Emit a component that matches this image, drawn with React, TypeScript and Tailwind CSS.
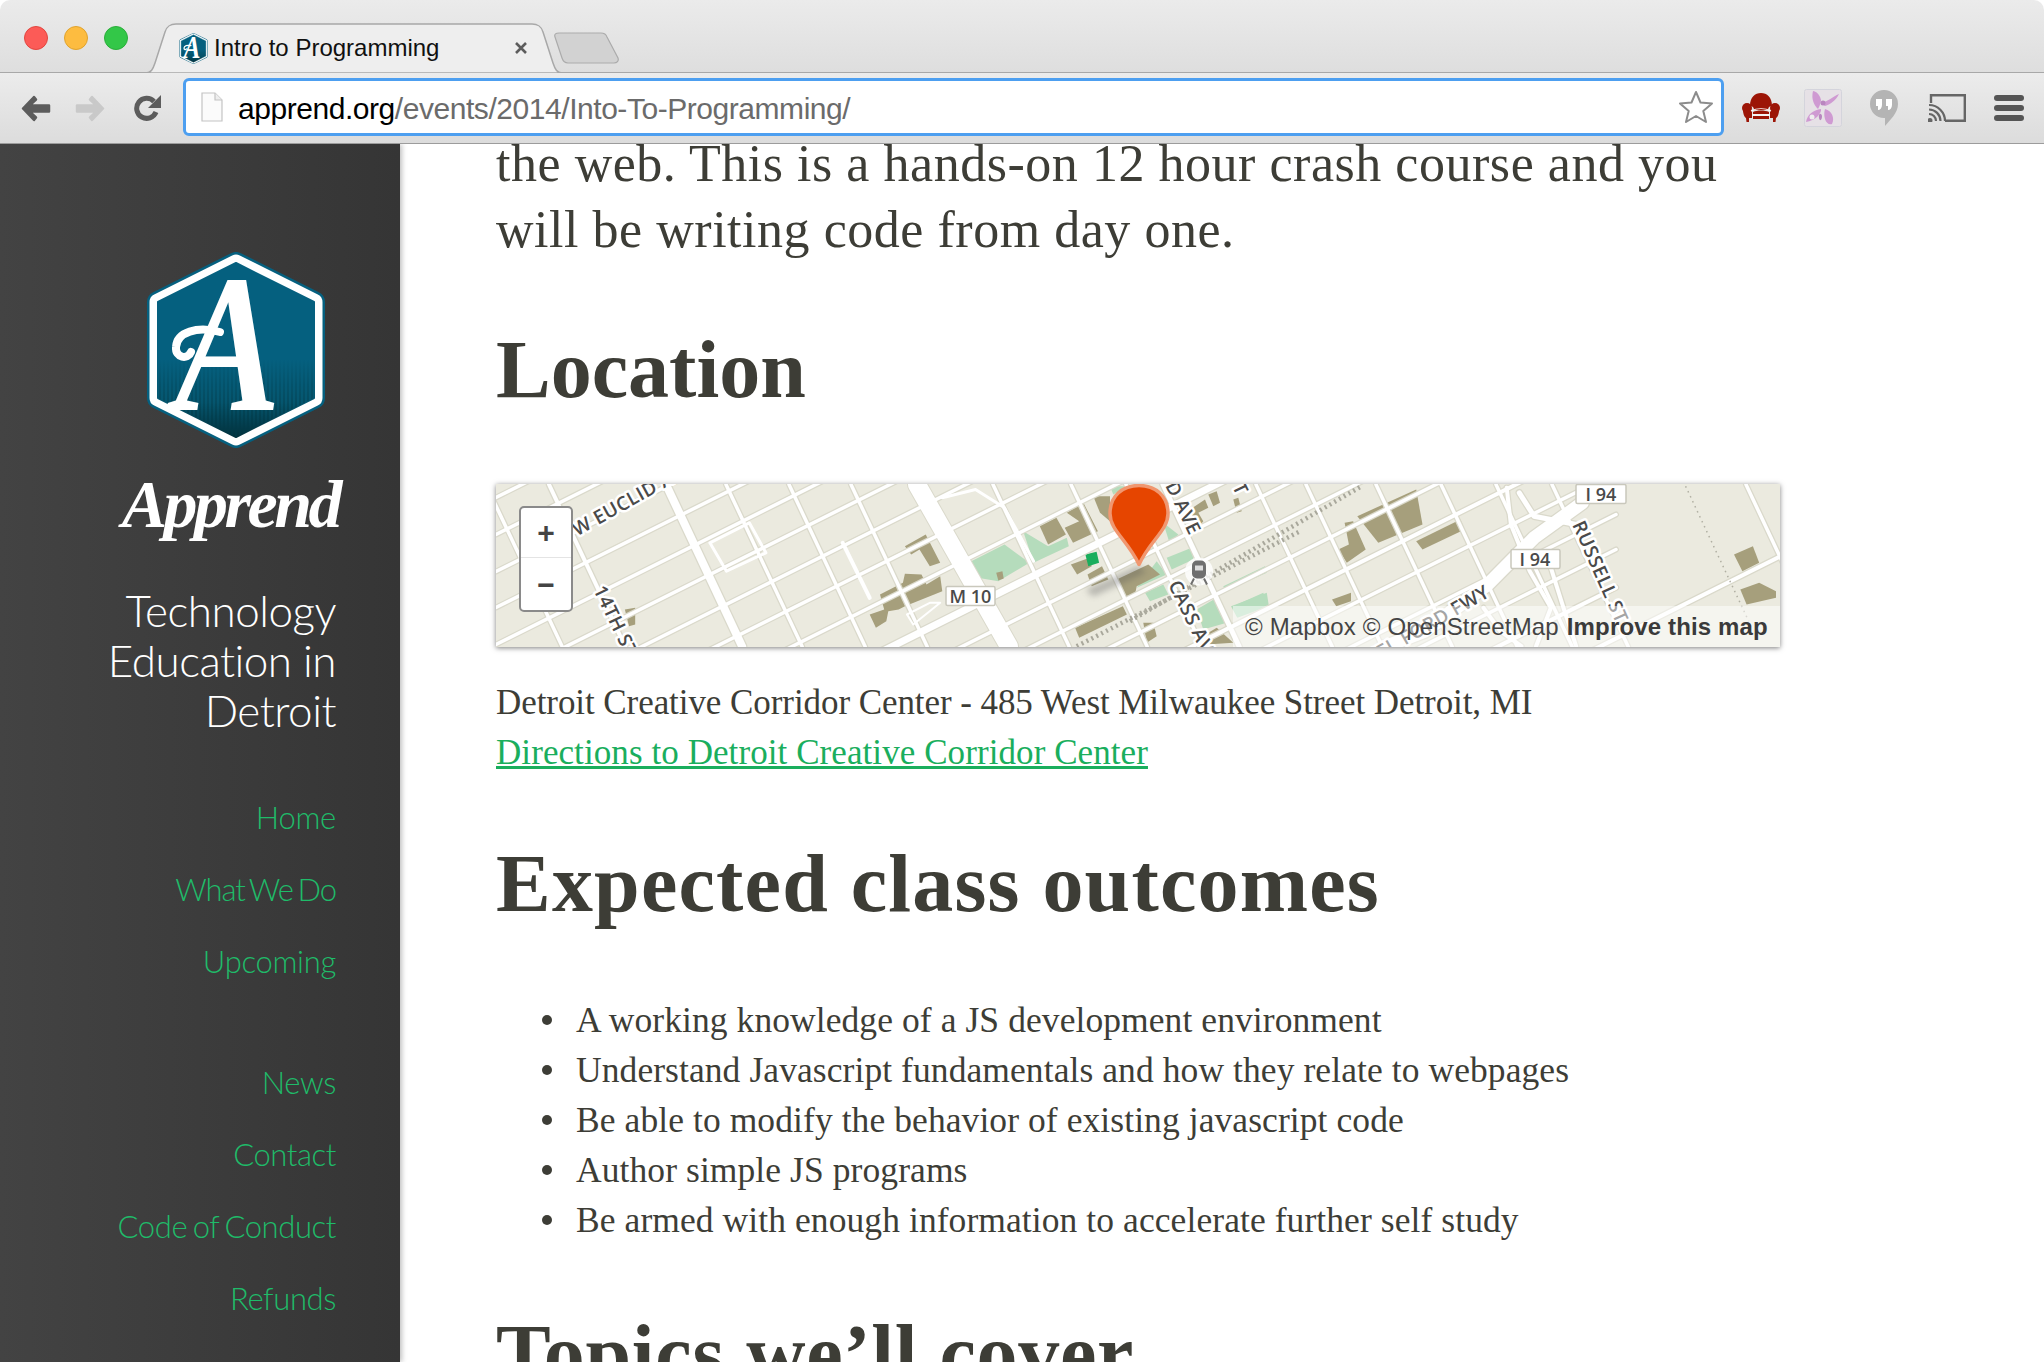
import React from "react";

type Pt = [number, number];
const z4 = (x: number, y: number): Pt => [x / 2.41 - 6, y / 3 - 10];
const z5 = (x: number, y: number): Pt => [x / 2.376 + 634, y / 3 - 10];
const z6 = (x: number, y: number): Pt => [x / 3 + 504, y / 3 - 5];
const pts = (f: (x: number, y: number) => Pt, a: number[]) => {
  const out: string[] = [];
  for (let i = 0; i < a.length; i += 2) {
    const [x, y] = f(a[i], a[i + 1]);
    out.push(`${x.toFixed(1)},${y.toFixed(1)}`);
  }
  return out.join(" ");
};

const familyA: [number, number, number?, number?][] = [
  [13, 3.5], [50, 3.5], [87, 3.5], [123, 3.5], [160, 3.5], [197, 3.5], [235, 3.5], [272, 3.5], [310, 3.5],
  [360, 7], [395, 3.5], [430, 3.5], [470, 3.5], [510, 4], [548, 3.5, 0, 1120], [590, 3.5, 0, 1120], [625, 3.5, 820, 1120], [663, 4, 0, 1120], [714, 4, 1060, 1284],
];
const familyB: [number, number][] = [
  [-10, 3.5], [53, 4], [170, 8], [230, 3.5], [293, 3.5], [355, 3.5], [497, 3.5], [575, 3.5], [630, 3.5], [667, 5],
  [760, 3.5], [810, 3.5], [880, 3.5], [945, 3.5], [1000, 3.5], [1056, 3.5], [1250, 3.5],
];

const tan = [
  pts(z4, [325, 405, 350, 400, 350, 450, 335, 455]),
  pts(z4, [1000, 215, 1050, 180, 1085, 265, 1060, 275, 1035, 225, 1015, 240]),
  pts(z4, [940, 360, 995, 325, 1000, 298, 1040, 300, 1052, 330, 1085, 305, 1090, 350, 1000, 395, 985, 405, 960, 410, 955, 440, 930, 460, 915, 420, 950, 405]),
  pts(z4, [1325, 155, 1365, 130, 1388, 180, 1345, 210]),
  pts(z4, [1390, 115, 1430, 85, 1465, 170, 1405, 205, 1385, 160, 1420, 140]),
  pts(z4, [1400, 270, 1445, 250, 1450, 275, 1415, 300]),
  pts(z4, [1440, 300, 1475, 275, 1490, 315, 1450, 335]),
  pts(z4, [1410, 460, 1525, 395, 1535, 420, 1420, 490]),
  pts(z4, [1220, 295, 1235, 290, 1238, 312, 1225, 318]),
  pts(z5, [540, 125, 680, 45, 695, 150, 590, 205]),
  pts(z5, [510, 145, 530, 140, 560, 225, 515, 265, 495, 225, 520, 210]),
  pts(z5, [680, 200, 785, 135, 795, 165, 695, 225]),
  pts(z5, [1435, 240, 1480, 215, 1495, 265, 1455, 290]),
  pts(z5, [1450, 345, 1495, 325, 1535, 350, 1535, 370, 1465, 390]),
  pts(z5, [480, 375, 525, 355, 525, 380, 490, 395]),
  pts(z6, [350, 300, 445, 255, 480, 285, 410, 320, 405, 345, 375, 350]),
  pts(z6, [570, 90, 615, 60, 625, 85, 595, 100, 610, 125, 590, 150]),
  pts(z6, [625, 45, 650, 35, 660, 70, 640, 80]),
  pts(z6, [700, 60, 715, 55, 725, 95, 710, 100]),
  pts(z6, [430, 430, 460, 430, 470, 470, 440, 490]),
  pts(z6, [625, 460, 650, 445, 700, 490, 620, 495]),
  pts(z6, [280, 50, 330, 50, 330, 125, 300, 100]),
];
const parks = [
  pts(z4, [1160, 260, 1240, 210, 1300, 265, 1225, 320, 1175, 310]),
  pts(z4, [1285, 170, 1345, 215, 1390, 190, 1395, 215, 1310, 265]),
  pts(z6, [410, 325, 470, 245, 500, 285]),
  pts(z6, [500, 235, 575, 205, 580, 240, 515, 270]),
  pts(z6, [490, 130, 535, 165, 510, 195]),
  pts(z6, [670, 320, 795, 260, 800, 280, 675, 335]),
  pts(z6, [590, 390, 650, 355, 680, 430, 610, 450]),
  pts(z6, [700, 380, 790, 340, 800, 370, 710, 410]),
  pts(z6, [435, 340, 490, 315, 505, 345, 450, 365]),
  pts(z6, [330, 20, 385, 20, 340, 45]),
  pts(z5, [240, 395, 325, 355, 330, 395, 255, 430]),
];

function Map() {
  const H = 162;
  const aLine = ([c, , a = 0, b = 1284]: [number, number, number?, number?]) =>
    `M${a} ${c - 0.5 * a}L${b} ${c - 0.5 * b}`;
  const bLine = ([x0]: [number, number]) => `M${x0} 0L${x0 + H * 0.47} ${H}`;
  const fwy = [
    { d: pts(z5, [1075, 85, 960, 190, 850, 330, 700, 470, 600, 520]), w: 13 },
    { d: pts(z5, [895, 40, 905, 150, 950, 290, 1000, 400, 965, 515]), w: 4 },
    { d: pts(z5, [925, 55, 960, 125, 1060, 150]), w: 5 },
    { d: pts(z5, [840, 400, 880, 470, 930, 515]), w: 4 },
    { d: pts(z5, [1000, 280, 1030, 400, 1060, 515]), w: 4 },
  ];
  const label = "fill-[#4a4a4a] font-['Open_Sans',sans-serif] text-[19px] font-semibold [paint-order:stroke] stroke-white stroke-[5px] [stroke-linejoin:round]";
  const shield = "fill-[#4a4a4a] font-['Open_Sans',sans-serif] text-[18px] font-semibold";
  return (
    <svg viewBox="0 0 1284 162" className="block w-full h-full bg-[#ebeadf]">
      {parks.map((p, i) => <polygon key={i} points={p} fill="#b5dcbc" />)}
      {tan.map((p, i) => <polygon key={i} points={p} fill="#a69f7c" />)}
      <polygon points={pts(z4, [1435, 240, 1462, 232, 1468, 265, 1442, 275])} fill="#1aae5d" />
      <g fill="none" stroke="#dad9cb" strokeLinecap="round" strokeLinejoin="round">
        {familyA.map((l, i) => <path key={i} d={aLine(l)} strokeWidth={l[1] + 2.5} />)}
        {familyB.map((l, i) => <path key={i} d={bLine(l)} strokeWidth={l[1] + 2.5} />)}
        <path d="M421 0L513 162" strokeWidth="20" />
        {fwy.map((l, i) => <polyline key={i} points={l.d} strokeWidth={l.w + 2.5} />)}
      </g>
      <g fill="none" stroke="#fff" strokeLinecap="round" strokeLinejoin="round">
        {familyA.map((l, i) => <path key={i} d={aLine(l)} strokeWidth={l[1]} />)}
        {familyB.map((l, i) => <path key={i} d={bLine(l)} strokeWidth={l[1]} />)}
        <path d="M421 0L513 162" strokeWidth="18" />
        {fwy.map((l, i) => <polyline key={i} points={l.d} strokeWidth={l.w} />)}
        <polyline points={pts(z4, [530, 205, 625, 145, 665, 235, 570, 290, 530, 205])} strokeWidth="3" />
        <polyline points={pts(z4, [1090, 70, 1170, 45, 1240, 100, 1310, 260])} strokeWidth="3" />
        <polyline points={pts(z4, [850, 205, 915, 370])} strokeWidth="4" />
        <polyline points={pts(z4, [1005, 420, 1060, 385, 1085, 385, 1020, 450, 1005, 420])} strokeWidth="2" />
      </g>
      <g fill="none" stroke="#a9a89c" strokeWidth="4.5" strokeDasharray="2 3.5">
        <polyline points={pts(z6, [230, 500, 900, 155])} />
        <polyline points={pts(z5, [0, 440, 550, 35])} />
      </g>
      <polyline points={pts(z5, [1320, 35, 1470, 440])} fill="none" stroke="#b0afa2" strokeWidth="1.5" strokeDasharray="1.5 4" />
      <g transform="translate(703 87)">
        <circle r="14" fill="#fff" opacity="0.8" />
        <rect x="-7" y="-11" width="14" height="18" rx="5" fill="#6f6f6f" />
        <rect x="-4" y="-6" width="8" height="5" fill="#dcdcdc" />
        <path d="M-5 7L-8 13M5 7L8 13" stroke="#6f6f6f" strokeWidth="2" />
      </g>
      <text transform="translate(81 52) rotate(-29)" className={label} letterSpacing="0.5">W EUCLID A</text>
      <text transform="translate(97 105) rotate(64)" className={label} letterSpacing="0.5">14TH ST</text>
      <text transform="translate(669 1) rotate(64)" className={label} letterSpacing="0.5">D AVE</text>
      <text transform="translate(672 100) rotate(64)" className={label} letterSpacing="0.5">CASS AV</text>
      <text transform="translate(1076 40) rotate(66)" className={label} letterSpacing="0.5">RUSSELL ST</text>
      <text transform="translate(876 180) rotate(-30)" className={label} letterSpacing="0.5">FEL FORD FWY</text>
      <text transform="translate(736 2) rotate(64)" className={label}>T</text>
      {[[450, 102, 49], [1080, 0, 50], [1015, 65, 49]].map(([x, y, w], i) => (
        <rect key={i} x={x} y={y} width={w} height="19" rx="1.5" fill="#fff" stroke="#c9c8bc" strokeWidth="1.5" />
      ))}
      <text x="474.5" y="118" textAnchor="middle" className={shield}>M 10</text>
      <text x="1105" y="16" textAnchor="middle" className={shield}>I 94</text>
      <text x="1039" y="81" textAnchor="middle" className={shield}>I 94</text>
      <polygon points="643,81 590,105 597,112 650,88" fill="#555" opacity="0.35" style={{ filter: "blur(3px)" }} />
      <path d="M643 80C632 56 614 46 614 29C614 11 627 1 643 1C659 1 672 11 672 29C672 46 654 56 643 80Z" fill="#e64500" stroke="#f09770" strokeWidth="3.5" strokeLinejoin="round" />
    </svg>
  );
}

function Hex({ id, className }: { id: string; className: string }) {
  const hex = "89,11 167,50 167,146 89,185 11,146 11,50";
  return (
    <svg viewBox="0 0 178 196" className={className}>
      <defs>
        <linearGradient id={`${id}g`} x1="0" y1="0" x2="0" y2="1">
          <stop offset="0.55" stopColor="#05607f" />
          <stop offset="0.8" stopColor="#05566f" />
          <stop offset="1" stopColor="#02313c" />
        </linearGradient>
        <pattern id={`${id}s`} width="4" height="10" patternUnits="userSpaceOnUse">
          <rect width="2" height="10" fill="#023a48" />
        </pattern>
        <linearGradient id={`${id}f`} x1="0" y1="0" x2="0" y2="1">
          <stop offset="0.55" stopColor="#fff" stopOpacity="0" />
          <stop offset="1" stopColor="#fff" stopOpacity="0.8" />
        </linearGradient>
        <mask id={`${id}m`}>
          <rect width="178" height="196" fill={`url(#${id}f)`} />
        </mask>
      </defs>
      <polygon points={hex} fill="#05607f" stroke="#05607f" strokeWidth="22" strokeLinejoin="round" />
      <polygon points={hex} fill="#fff" stroke="#fff" strokeWidth="17" strokeLinejoin="round" />
      <polygon points={hex} fill={`url(#${id}g)`} stroke={`url(#${id}g)`} strokeWidth="2" strokeLinejoin="round" />
      <polygon points={hex} fill={`url(#${id}s)`} mask={`url(#${id}m)`} />
      <text transform="translate(28 158) scale(0.8 1)" fill="#fff" fontFamily="Liberation Serif, serif" fontWeight="700" fontStyle="italic" fontSize="198">A</text>
      <path d="M73 80C50 74 30 80 29 95C28 106 41 108 44 100" fill="none" stroke="#fff" strokeWidth="8" strokeLinecap="round" />
    </svg>
  );
}

const BackArrow = ({ className, color }: { className: string; color: string }) => (
  <svg viewBox="0 0 31 27" className={className}>
    <path d="M14 2L3 13.5L14 25L16 22.5L9.500 16.500H29V10.500H9.500L16 4.500Z" fill={color} stroke={color} strokeWidth="2.500" strokeLinejoin="round" />
  </svg>
);

const navB = ["News", "Contact", "Code of Conduct", "Refunds"];
const outcomes = [
  "A working knowledge of a JS development environment",
  "Understand Javascript fundamentals and how they relate to webpages",
  "Be able to modify the behavior of existing javascript code",
  "Author simple JS programs",
  "Be armed with enough information to accelerate further self study",
];

export default function App() {
  return (
    <div className="w-[2044px] h-[1362px] overflow-hidden bg-white flex flex-col">
      {/* window chrome */}
      <header className="relative z-10 h-[144px] shrink-0 rounded-t-[10px] overflow-hidden font-['Liberation_Sans',sans-serif]">
        <div className="h-[73px] bg-gradient-to-b from-[#ebebeb] to-[#dedede] border-b border-[#a8a8a8] flex items-start">
          <div className="flex gap-[16px] pl-[24px] pt-[26px] w-[146px]">
            <span className="w-[24px] h-[24px] rounded-full bg-[#fc5b57] border border-[#e2463f]" />
            <span className="w-[24px] h-[24px] rounded-full bg-[#fdbc40] border border-[#e0a32e]" />
            <span className="w-[24px] h-[24px] rounded-full bg-[#33c748] border border-[#2aae3a]" />
          </div>
          <div className="relative w-[416px] h-[50px] mt-[23px] flex items-center pl-[33px] pr-[34px]">
            <svg viewBox="0 0 416 50" className="absolute inset-0 w-full h-full">
              <path d="M0 50C5 50 7 46 9 40L19 9C21 3 24 1 30 1H386C392 1 395 3 397 9L407 40C409 46 411 50 416 50Z" fill="#eeeeee" stroke="#a8a8a8" strokeWidth="1.500" />
              <path d="M0 50H416V51H0Z" fill="#eeeeee" />
            </svg>
            <Hex id="fav" className="relative w-[29px] h-[31px] shrink-0" />
            <span className="relative ml-[6px] text-[24px] leading-none text-[#111]">Intro to Programming</span>
            <svg viewBox="0 0 14 14" className="relative ml-auto w-[14px] h-[14px]">
              <path d="M2 2L12 12M12 2L2 12" stroke="#5c5c5c" strokeWidth="2.600" />
            </svg>
          </div>
          <svg viewBox="0 0 66 32" className="w-[66px] h-[32px] mt-[32px] -ml-[8px]">
            <path d="M1 5C0 2 2 1 5 1H47C50 1 52 2 53 5L64 26C65 29 63 31 60 31H14C11 31 9 29 8 26Z" fill="#d2d2d2" stroke="#ababab" strokeWidth="1.200" />
          </svg>
        </div>
        <div className="h-[71px] bg-gradient-to-b from-[#ececec] to-[#dcdcdc] border-b border-[#9c9c9c] flex items-center pl-[20px] pr-[20px]">
          <BackArrow className="w-[31px] h-[27px]" color="#5c5c5c" />
          <BackArrow className="w-[31px] h-[27px] ml-[24px] -scale-x-100" color="#c9c9c9" />
          <svg viewBox="0 0 27 27" className="w-[27px] h-[27px] ml-[28px]">
            <path d="M22 17A10 10 0 1 1 20 6.500" fill="none" stroke="#5c5c5c" strokeWidth="5" />
            <path d="M27 0V13H14Z" fill="#5c5c5c" />
          </svg>
          <div className="ml-[22px] w-[1541px] h-[58px] -mt-[2px] bg-white rounded-[6px] border-[3px] border-[#4d9ff0] flex items-center pl-[15px] pr-[6px]">
            <svg viewBox="0 0 22 30" className="w-[22px] h-[30px] shrink-0">
              <path d="M1 1H14L21 8V29H1Z" fill="#fbfbfb" stroke="#c4c4c4" strokeWidth="1.200" />
              <path d="M14 1V8H21" fill="#eee" stroke="#c4c4c4" strokeWidth="1.200" />
            </svg>
            <span className="ml-[15px] pt-[2px] text-[30px] tracking-[-0.45px] text-[#6b6b6b] whitespace-nowrap">
              <span className="text-black">apprend.org</span>/events/2014/Into-To-Programming/
            </span>
            <svg viewBox="0 0 36 34" className="ml-auto mr-[1px] w-[36px] h-[34px]">
              <path d="M18 2L22.500 12.500L34 13.500L25.300 21L28 32L18 26L8 32L10.700 21L2 13.500L13.500 12.500Z" fill="#fff" stroke="#8c8c8c" strokeWidth="2" strokeLinejoin="round" />
            </svg>
          </div>
          <svg viewBox="0 0 38 30" className="ml-[18px] w-[38px] h-[30px]">
            <path d="M8 13C8 4 13 0 19 0C25 0 30 4 30 13C27 13 26 15 26 17H12C12 15 11 13 8 13Z" fill="#9c1506" />
            <circle cx="5" cy="15" r="5" fill="#9c1506" />
            <circle cx="33" cy="15" r="5" fill="#9c1506" />
            <path d="M1 17H8C9 17 10 18 10 19V25H7V29H4.500L4 25C2 24 1 20 1 17Z" fill="#9c1506" />
            <path d="M37 17H30C29 17 28 18 28 19V25H31V29H33.500L34 25C36 24 37 20 37 17Z" fill="#9c1506" />
            <path d="M11 19C15 17 23 17 27 19V21H11Z" fill="#9c1506" />
            <path d="M11 23H27V26H11Z" fill="#9c1506" />
            <path d="M9 18C15 15 23 15 29 18" fill="none" stroke="#fff" strokeWidth="1.200" />
            <path d="M10 22H28" stroke="#fff" strokeWidth="1.200" />
          </svg>
          <svg viewBox="0 0 38 38" className="ml-[24px] w-[38px] h-[38px]">
            <rect x="0.500" y="0.500" width="37" height="37" rx="2" fill="#e6e1e6" stroke="#d4d4dc" />
            <path d="M9 2C14 3 16 7 17 11C17 14 15 18 14 20C10 16 7 10 9 2Z" fill="#cf9ad2" />
            <path d="M35 5C32 11 27 15 21 17C19 16 18 14 20 12C22 14 28 8 35 5Z" fill="#cf9ad2" />
            <path d="M2 33C3 26 9 21 17 20C18 24 11 32 2 33Z" fill="#cf9ad2" />
            <path d="M21 20C28 22 31 29 28 35C25 36 22 34 21 30C20 27 20 23 21 20Z" fill="#cf9ad2" />
            <circle cx="19" cy="14" r="2.500" fill="#b986bf" />
            <path d="M15 29C14 25 17 23 18 27C18 31 16 33 15 29Z" fill="#b986bf" />
            <circle cx="8" cy="28" r="2.500" fill="#eee" />
          </svg>
          <svg viewBox="0 0 28 36" className="ml-[28px] w-[28px] h-[36px]">
            <path d="M14 0A14 14 0 0 1 28 14C28 23 20 30 15 36V28H14A14 14 0 0 1 14 0Z" fill="#b4b4b4" />
            <path d="M6 9H12V15C12 18 10 20 8 20V16H6ZM16 9H22V15C22 18 20 20 18 20V16H16Z" fill="#fff" />
          </svg>
          <svg viewBox="0 0 38 28" className="ml-[30px] w-[38px] h-[28px]">
            <path d="M3 9V1.200H36.800V26.800H17" fill="none" stroke="#666" strokeWidth="2.400" />
            <circle cx="2" cy="26.500" r="2.500" fill="#666" />
            <path d="M1 20A7 7 0 0 1 8 27" fill="none" stroke="#666" strokeWidth="2.200" />
            <path d="M1 15.500A11.500 11.500 0 0 1 12.500 27" fill="none" stroke="#666" strokeWidth="2.200" />
            <path d="M1 11A16 16 0 0 1 17 27" fill="none" stroke="#666" strokeWidth="2.200" />
          </svg>
          <div className="ml-[28px] w-[30px] flex flex-col gap-[4px]">
            <span className="h-[6px] rounded-full bg-[#555]" />
            <span className="h-[6px] rounded-full bg-[#555]" />
            <span className="h-[6px] rounded-full bg-[#555]" />
          </div>
        </div>
      </header>

      <div className="flex flex-1 min-h-0">
        {/* sidebar */}
        <aside className="relative z-[5] w-[400px] shrink-0 bg-gradient-to-r from-[#434343] to-[#353535] shadow-[2px_0_5px_rgba(0,0,0,0.25)] flex flex-col items-end pr-[64px] text-right">
          <Hex id="logo" className="w-[178px] h-[196px] mt-[108px] mr-[11px]" />
          <div className="mt-[21px] -mr-[3px] h-[70px] text-[68px] leading-[70px] font-bold italic tracking-[-3.500px] text-white font-['Liberation_Serif',serif]">Apprend</div>
          <p className="mt-[46px] w-[240px] text-[44px] leading-[50px] font-light tracking-[-0.5px] text-white font-['Lato',sans-serif]">Technology Education in Detroit</p>
          <ul className="mt-[46px] text-[31px] leading-[72px] font-light tracking-[-0.3px] [word-spacing:-2.5px] text-[#1fbb69] font-['Lato',sans-serif]">
            <li>Home</li>
            <li className="tracking-[-1.1px]">What We Do</li>
            <li>Upcoming</li>
          </ul>
          <ul className="mt-[49px] text-[31px] leading-[72px] font-light tracking-[-0.4px] [word-spacing:-2.5px] text-[#1fbb69] font-['Lato',sans-serif]">
            {navB.map((n) => <li key={n}>{n}</li>)}
          </ul>
        </aside>

        {/* content */}
        <main className="flex-1 min-w-0 pl-[96px] text-[#3d3d36] font-['Liberation_Serif',serif] overflow-hidden">
          <p className="-mt-[13px] w-[1260px] text-[52px] leading-[66px] tracking-[0.53px]">
            the web. This is a hands-on 12 hour crash course and you will be writing code from day one.
          </p>
          <h2 className="mt-[62px] text-[82px] leading-[90px] font-bold tracking-[0px]">Location</h2>
          <div className="relative mt-[69px] w-[1284px] h-[163px] shadow-[0_1px_5px_rgba(0,0,0,0.5)]">
            <Map />
            <div className="absolute left-[23px] top-[22px] w-[54px] h-[106px] bg-white border-2 border-[#8a8a8a] rounded-[5px] flex flex-col font-['Liberation_Sans',sans-serif] font-bold text-[30px] text-[#444]">
              <span className="h-[50px] flex items-center justify-center border-b border-[#e4e4e4]">+</span>
              <span className="flex-1 flex items-center justify-center">−</span>
            </div>
            <div className="absolute right-0 bottom-0 w-[547px] h-[41px] bg-white/50 flex items-center pl-[12px] font-['Liberation_Sans',sans-serif] text-[24px] tracking-[0.15px] text-[#444] whitespace-nowrap">
              © Mapbox © OpenStreetMap <b className="ml-[8px] text-[#3a3a3a]">Improve this map</b>
            </div>
          </div>
          <p className="mt-[31px] text-[35px] leading-[50px] tracking-[-0.07px]">Detroit Creative Corridor Center - 485 West Milwaukee Street Detroit, MI</p>
          <a className="block text-[35px] leading-[50px] tracking-[0.08px] text-[#1aae5d] underline">Directions to Detroit Creative Corridor Center</a>
          <h2 className="mt-[61px] text-[82px] leading-[90px] font-bold tracking-[1.200px]">Expected class outcomes</h2>
          <ul className="mt-[66px] pl-[46px] text-[35.5px] leading-[50px] tracking-[0.08px]">
            {outcomes.map((o) => (
              <li key={o} className="flex items-center gap-[24px]">
                <span className="w-[10px] h-[10px] rounded-full bg-[#3d3d36] shrink-0" />
                {o}
              </li>
            ))}
          </ul>
          <h2 className="mt-[64px] text-[82px] leading-[90px] font-bold tracking-[0.700px]">Topics we’ll cover</h2>
        </main>
      </div>
    </div>
  );
}
